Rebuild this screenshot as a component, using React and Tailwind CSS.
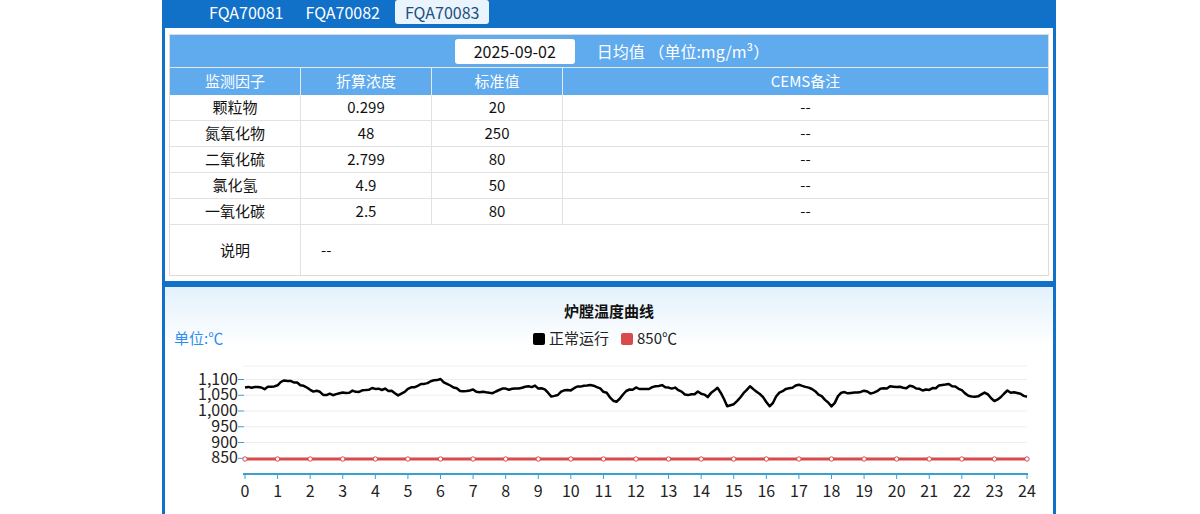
import React from "react";

const rows = [
  ["颗粒物", "0.299", "20"],
  ["氮氧化物", "48", "250"],
  ["二氧化硫", "2.799", "80"],
  ["氯化氢", "4.9", "50"],
  ["一氧化碳", "2.5", "80"],
];

const keys = [1075,1078,1072,1080,1100,1090,1075,1060,1050,1055,1060,1062,1070,1072,1065,1050,1072,1085,1095,1098,1080,1062,1068,1060,1052,1070,1072,1075,1078,1072,1042,1065,1070,1085,1078,1060,1030,1060,1075,1070,1082,1078,1072,1050,1060,1045,1075,1010,1040,1080,1055,1015,1060,1072,1082,1070,1045,1015,1060,1055,1062,1058,1070,1080,1075,1078,1066,1072,1085,1080,1055,1045,1060,1030,1062,1060,1048];

function curve() {
  const pts = [];
  const n = 240;
  let seed = 7;
  const rnd = () => { seed = (seed * 9301 + 49297) % 233280; return seed / 233280; };
  for (let i = 0; i <= n; i++) {
    const t = (i / n) * (keys.length - 1);
    const a = Math.floor(t), b = Math.min(a + 1, keys.length - 1);
    const v = keys[a] + (keys[b] - keys[a]) * (t - a) + (rnd() - 0.5) * 8;
    const x = 245 + (i / n) * 782;
    const y = 474 - (v - 800) * (15.75 / 50);
    pts.push(`${x.toFixed(1)},${y.toFixed(1)}`);
  }
  return pts.join(" ");
}

export default function App() {
  const font = { fontFamily: '"Microsoft YaHei","Noto Sans CJK SC","Noto Sans",sans-serif' };
  const yTicks = [1100, 1050, 1000, 950, 900, 850];
  const yOf = (v) => 474 - (v - 800) * (15.75 / 50);
  const xOf = (h) => 245 + h * (782 / 24);
  return (
    <div className="w-[1200px] h-[514px] bg-white overflow-hidden" style={font}>
      <div className="ml-[162px] w-[894px] h-[514px] bg-[#1170c8] px-[3px] flex flex-col">
        <div className="h-[28px] flex items-start gap-[8px] pl-[37px] text-white text-[16px]">
          <div className="px-[7px] h-[24px] flex items-center">FQA70081</div>
          <div className="px-[7px] h-[24px] flex items-center">FQA70082</div>
          <div className="px-[10px] h-[24px] flex items-center bg-[#eaf4fc] text-[#1a4f80] rounded-[3px]">FQA70083</div>
        </div>
        <div className="bg-white px-[4px] pt-[6px] h-[253px]">
          <div className="border border-[#dcdcdc] text-[15px] text-[#111]">
            <div className="h-[33px] bg-[#60aaee] flex items-center justify-center text-white border-b border-[#e8e8e8] pl-[6px]">
              <div className="bg-white text-[#111] rounded-[3px] w-[120px] h-[25px] flex items-center justify-center mr-[22px] text-[16px]">2025-09-02</div>
              <span className="text-[16px]">日均值 （单位:mg/m³）</span>
            </div>
            <div className="grid grid-cols-[131px_131px_131px_1fr] h-[27px] bg-[#60aaee] text-white">
              {["监测因子", "折算浓度", "标准值", "CEMS备注"].map((h, i) => (
                <div key={i} className={`flex items-center justify-center ${i < 3 ? "border-r border-[#e8e8e8]" : ""}`}>{h}</div>
              ))}
            </div>
            {rows.map((r, ri) => (
              <div key={ri} className="grid grid-cols-[131px_131px_131px_1fr] h-[26px] border-b border-[#e2e2e2]">
                <div className="flex items-center justify-center border-r border-[#e2e2e2]">{r[0]}</div>
                <div className="flex items-center justify-center border-r border-[#e2e2e2]">{r[1]}</div>
                <div className="flex items-center justify-center border-r border-[#e2e2e2]">{r[2]}</div>
                <div className="flex items-center justify-center">--</div>
              </div>
            ))}
            <div className="grid grid-cols-[131px_1fr] h-[50px]">
              <div className="flex items-center justify-center border-r border-[#e2e2e2]">说明</div>
              <div className="flex items-center pl-[20px]">--</div>
            </div>
          </div>
        </div>
        <div className="h-[6px]" />
        <div className="flex-1 bg-gradient-to-b from-[#e3f1fb] to-white to-[60px] relative">
          <div className="text-center font-bold text-[15px] text-[#111] pt-[13px]">炉膛温度曲线</div>
          <div className="flex items-center h-[26px] mt-[3px]">
            <div className="text-[#2b8ef0] text-[15px] pl-[9px] w-[368px]">单位:℃</div>
            <div className="flex items-center gap-[4px] text-[15px] text-[#222]">
              <span className="w-[12px] h-[12px] bg-black rounded-[2px] inline-block" />
              <span className="mr-[8px]">正常运行</span>
              <span className="w-[12px] h-[12px] bg-[#d94a4a] rounded-[2px] inline-block" />
              <span>850℃</span>
            </div>
          </div>
          <svg className="absolute left-[-165px] top-[-287px]" width="1200" height="514" style={{ pointerEvents: "none" }}>
            {[366, ...yTicks.map(yOf)].map((y, i) => (
              <line key={i} x1="243" x2="1027" y1={y} y2={y} stroke="#eeeeee" />
            ))}
            {yTicks.map((v) => (
              <g key={v}>
                <line x1="238" x2="244" y1={yOf(v)} y2={yOf(v)} stroke="#3aa0d0" />
                <text x="238" y={yOf(v) + 5} textAnchor="end" fontSize="16" fill="#222" style={font}>{v.toLocaleString("en-US")}</text>
              </g>
            ))}
            <line x1="243" x2="1028" y1="474" y2="474" stroke="#3aa0d0" strokeWidth="2" />
            {Array.from({ length: 25 }, (_, h) => (
              <g key={h}>
                <line x1={xOf(h)} x2={xOf(h)} y1="474" y2="479" stroke="#3aa0d0" />
                <text x={xOf(h)} y="497" textAnchor="middle" fontSize="16" fill="#222" style={font}>{h}</text>
              </g>
            ))}
            <line x1="245" x2="1027" y1="459" y2="459" stroke="#d94a4a" strokeWidth="3" />
            {Array.from({ length: 25 }, (_, h) => (
              <circle key={h} cx={xOf(h)} cy="459" r="2.2" fill="#fff" stroke="#d94a4a" strokeWidth="1" />
            ))}
            <polyline points={curve()} fill="none" stroke="#000" strokeWidth="2.5" strokeLinejoin="round" />
          </svg>
        </div>
      </div>
    </div>
  );
}
